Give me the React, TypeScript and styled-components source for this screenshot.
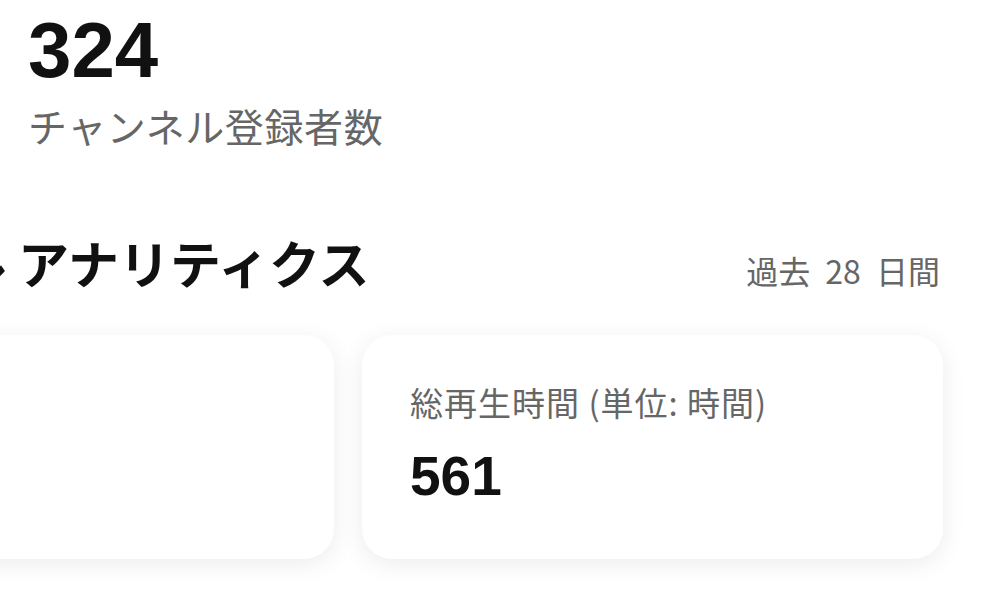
import styled, { createGlobalStyle } from "styled-components";

const GlobalStyle = createGlobalStyle`
  html, body {
    margin: 0;
    padding: 0;
    background: #ffffff;
    overflow: hidden;
  }
  body {
    font-family: "Noto Sans CJK JP", sans-serif;
    -webkit-font-smoothing: antialiased;
  }
`;

const Page = styled.div`
  width: 993px;
  height: 602px;
  overflow: hidden;
  display: flex;
  flex-direction: column;
`;

const StatBlock = styled.div`
  padding: 11px 0 0 28px;
  display: flex;
  flex-direction: column;
`;

const StatValue = styled.div`
  font-family: "Liberation Sans", sans-serif;
  font-size: 78px;
  font-weight: 700;
  line-height: 78px;
  color: #111111;
`;

const StatLabel = styled.div`
  margin-top: 10px;
  font-size: 39px;
  letter-spacing: 0.6px;
  line-height: 52px;
  color: #666666;
`;

const Section = styled.section`
  margin: 80px 0 0 -247px;
  width: 1190px;
  display: flex;
  flex-direction: column;
`;

const SectionHeader = styled.div`
  display: flex;
  align-items: baseline;
  justify-content: space-between;
`;

const SectionTitle = styled.h2`
  margin: 0;
  font-size: 51px;
  font-weight: 700;
  line-height: 62px;
  color: #111111;
`;

const Period = styled.span`
  font-size: 32px;
  word-spacing: 8px;
  color: #666666;
  padding-right: 3px;
`;

const CardGrid = styled.div`
  margin-top: 42px;
  display: grid;
  grid-template-columns: 1fr 1fr;
  gap: 28px;
`;

const Card = styled.div`
  height: 224px;
  box-sizing: border-box;
  padding: 45px 48px 0;
  background: #ffffff;
  border-radius: 30px;
  box-shadow: 0 5px 24px rgba(0, 0, 0, 0.08);
  display: flex;
  flex-direction: column;
`;

const CardLabel = styled.div`
  font-size: 33px;
  letter-spacing: 1px;
  line-height: 44px;
  color: #666666;
`;

const CardValue = styled.div`
  margin-top: 23px;
  font-family: "Liberation Sans", sans-serif;
  font-size: 55px;
  font-weight: 700;
  line-height: 58px;
  color: #111111;
`;

const metrics = [
  { key: "views", label: "", value: "" },
  { key: "watch", label: "総再生時間 (単位: 時間)", value: "561" },
];

export default function App() {
  return (
    <Page>
      <GlobalStyle />
      <StatBlock>
        <StatValue>324</StatValue>
        <StatLabel>チャンネル登録者数</StatLabel>
      </StatBlock>

      <Section>
        <SectionHeader>
          <SectionTitle>チャンネル アナリティクス</SectionTitle>
          <Period>過去 28 日間</Period>
        </SectionHeader>
        <CardGrid>
          {metrics.map((m) => (
            <Card key={m.key}>
              {m.label && <CardLabel>{m.label}</CardLabel>}
              {m.value && <CardValue>{m.value}</CardValue>}
            </Card>
          ))}
        </CardGrid>
      </Section>
    </Page>
  );
}
